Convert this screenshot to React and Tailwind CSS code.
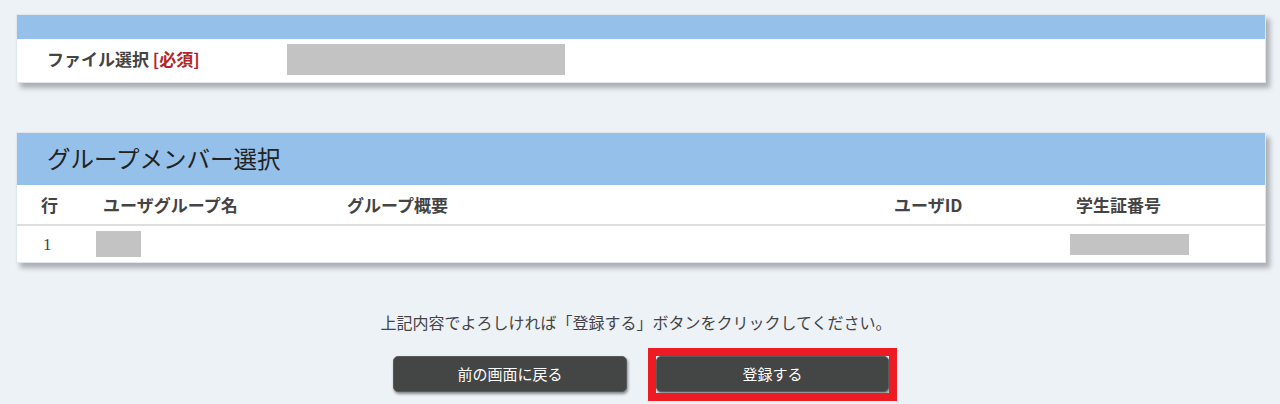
import React from "react";

const font = { fontFamily: '"Noto Sans CJK JP", "Noto Sans", sans-serif' };

export default function App() {
  return (
    <div
      className="w-[1280px] h-[404px] bg-[#edf2f7] overflow-hidden pt-[14px]"
      style={font}
    >
      {/* Card 1 */}
      <div className="ml-4 w-[1250px] border border-[#dfe6ee] bg-white shadow-[4px_5px_5px_rgba(0,0,0,0.28)]">
        <div className="h-[24px] bg-[#95c0ea]" />
        <div className="h-[43px] flex items-center">
          <div className="pl-[30px] w-[270px] text-[17px] font-bold text-[#444] leading-none mt-[-5px]">
            ファイル選択 <span className="text-[#b3252a]">[必須]</span>
          </div>
          <div className="w-[278px] h-[31px] bg-[#c3c3c3] mt-[-2px]" />
        </div>
      </div>

      {/* Card 2 */}
      <div className="ml-4 mt-[49px] w-[1250px] border border-[#dfe6ee] bg-white shadow-[4px_5px_5px_rgba(0,0,0,0.28)]">
        <div className="h-[52px] bg-[#95c0ea] flex items-center pl-[30px] text-[23.5px] text-[#222] leading-none">
          グループメンバー選択
        </div>
        <div className="h-[41px] grid grid-cols-[55px_251px_540px_178px_1fr] pl-6 items-center text-[17px] font-bold text-[#444] leading-none border-b-2 border-[#dedede]">
          <div>行</div>
          <div className="pl-[7px]">ユーザグループ名</div>
          <div>グループ概要</div>
          <div className="pl-[7px]">ユーザID</div>
          <div className="pl-[11px]">学生証番号</div>
        </div>
        <div className="h-[36px] grid grid-cols-[55px_251px_540px_178px_1fr] pl-6 items-center text-[17px] text-[#444] leading-none">
          <div className="pl-[2px]" style={{ fontFamily: '"Liberation Serif", serif' }}>1</div>
          <div>
            <div className="w-[45px] h-[26px] bg-[#c3c3c3]" />
          </div>
          <div />
          <div />
          <div className="pl-[5px]">
            <div className="w-[119px] h-[21px] bg-[#c3c3c3]" />
          </div>
        </div>
      </div>

      {/* Message */}
      <div className="mt-[51px] text-center text-[16px] text-[#444] leading-none pr-[8px]">
        上記内容でよろしければ「登録する」ボタンをクリックしてください。
      </div>

      {/* Buttons */}
      <div className="mt-[26px] flex justify-center gap-[29px] pl-[2px]">
        <button className="w-[234px] h-[36px] rounded-[5px] bg-[#444545] text-white text-[15px] border border-[#5a5a5a] shadow-[1px_2px_3px_rgba(0,0,0,0.45)]">
          前の画面に戻る
        </button>
        <div className="relative">
          <button className="w-[233px] h-[36px] rounded-[5px] bg-[#444545] text-white text-[15px] border border-[#5a5a5a] shadow-[1px_2px_3px_rgba(0,0,0,0.45)]">
            登録する
          </button>
          <div className="absolute -left-2 -right-2 -top-2 -bottom-[9px] border-8 border-[#ed1c24] pointer-events-none" />
        </div>
      </div>
    </div>
  );
}
